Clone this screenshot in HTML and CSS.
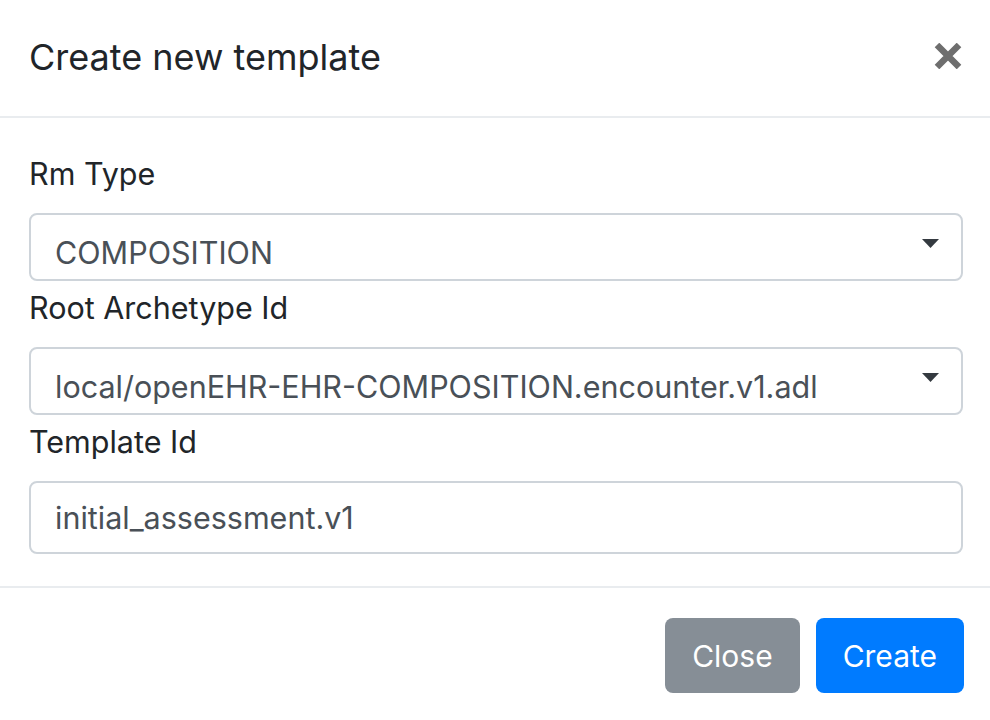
FILE: index.html
```html
<!DOCTYPE html>
<html lang="en">
<head>
    <meta charset="UTF-8">
    <meta name="viewport" content="width=device-width, initial-scale=1.0">
    <title>Create new template</title>
    <link rel="stylesheet" href="styles.css">
</head>
<body>
    <div class="modal">
        <div class="modal-header">
            <h5 class="modal-title">Create new template</h5>
            <button type="button" class="close" aria-label="Close">
                <svg width="28" height="26" viewBox="0 0 28 26">
                    <path d="M3 2 L25 24 M25 2 L3 24" stroke="#6e6e6e" stroke-width="6.5" fill="none"/>
                </svg>
            </button>
        </div>

        <form class="modal-body">
            <label for="rmType">Rm Type</label>
            <div class="select-wrap">
                <select id="rmType" class="form-control">
                    <option>COMPOSITION</option>
                </select>
                <svg class="caret" width="17" height="9" viewBox="0 0 17 9"><path d="M0 0 H17 L8.5 9 Z" fill="#343a40"/></svg>
            </div>

            <label for="rootArchetype">Root Archetype Id</label>
            <div class="select-wrap">
                <select id="rootArchetype" class="form-control">
                    <option>local/openEHR-EHR-COMPOSITION.encounter.v1.adl</option>
                </select>
                <svg class="caret" width="17" height="9" viewBox="0 0 17 9"><path d="M0 0 H17 L8.5 9 Z" fill="#343a40"/></svg>
            </div>

            <label for="templateId">Template Id</label>
            <input type="text" id="templateId" class="form-control text-input" value="initial_assessment.v1">
        </form>

        <div class="modal-footer">
            <button type="button" class="btn btn-secondary">Close</button>
            <button type="button" class="btn btn-primary">Create</button>
        </div>
    </div>
</body>
</html>
```

FILE: styles.css
```css
body {
    margin: 0;
    background: #fff;
    font-family: Inter, "Liberation Sans", Arial, sans-serif;
    color: #212529;
}
.modal {
    width: 990px;
    height: 720px;
    background: #fff;
}
.modal-header {
    display: flex;
    justify-content: space-between;
    align-items: flex-start;
    height: 118px;
    box-sizing: border-box;
    padding: 31px 28px 0 29px;
    border-bottom: 2px solid #e9ecef;
}
.modal-title {
    margin: 0;
    font-size: 36px;
    font-weight: 400;
    line-height: 52px;
}
.close {
    margin-top: 12px;
    padding: 0;
    border: none;
    background: none;
    cursor: pointer;
    line-height: 0;
}
.modal-body {
    margin: 0;
    padding: 34px 27px 32px 29px;
}
label {
    display: block;
    font-size: 30.5px;
    line-height: 44px;
    margin-bottom: 17px;
}
.select-wrap {
    position: relative;
    margin-bottom: 5px;
}
.form-control {
    display: block;
    width: 100%;
    box-sizing: border-box;
    border: 2px solid #ced4da;
    border-radius: 8px;
    background: #fff;
    color: #495057;
    font-family: inherit;
    font-size: 30.5px;
    outline: none;
}
select.form-control {
    height: 68px;
    padding: 10px 60px 0 24px;
    appearance: none;
    -webkit-appearance: none;
}
.caret {
    position: absolute;
    right: 24px;
    top: 26px;
    pointer-events: none;
}
.text-input {
    height: 73px;
    padding: 0 24px;
}
.modal-footer {
    display: flex;
    justify-content: flex-end;
    gap: 16px;
    padding: 30px 26px 0 0;
    border-top: 2px solid #e9ecef;
}
.btn {
    height: 75px;
    padding: 0 27px;
    border: none;
    border-radius: 8px;
    color: #fff;
    font-family: inherit;
    font-size: 30px;
    cursor: pointer;
}
.btn-secondary {
    background-color: #868e96;
}
.btn-primary {
    background-color: #007bff;
}
```
